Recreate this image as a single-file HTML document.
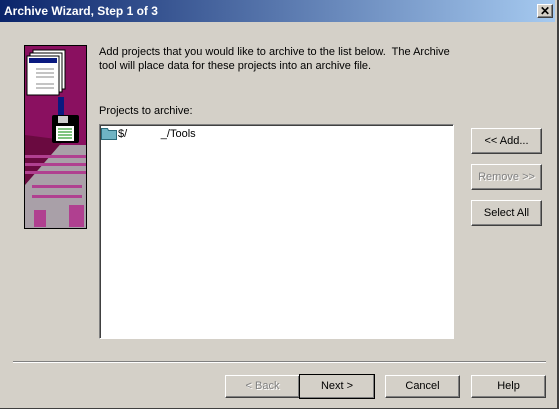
<!DOCTYPE html><html><head><style>
body{margin:0;width:559px;height:409px;background:#d4d0c8;font:11px Tahoma,"Liberation Sans",sans-serif;position:relative;overflow:hidden}
.a{position:absolute}
.title{left:0;top:0;width:555px;height:22px;background:linear-gradient(90deg,#0a246a,#a6caf0);color:#fff;font-weight:bold;font-size:12px;line-height:22px;padding-left:4px;box-sizing:border-box}
.btn{position:absolute;background:#d4d0c8;border:1px solid;border-color:#fff #404040 #404040 #fff;box-shadow:inset -1px -1px #808080;text-align:center;box-sizing:border-box;font-size:11px;color:#000}
.x{left:537px;top:4px;width:16px;height:14px;line-height:12px;font-weight:bold;font-size:12px}
</style></head><body>
<div class="a" style="left:0;top:0;width:559px;height:409px;box-sizing:border-box;border-right:2px solid #404040;border-bottom:1px solid #404040"></div>
<div class="a title">Archive Wizard, Step 1 of 3</div>
<div class="btn x">✕</div>
<svg class="a" style="left:24px;top:45px" width="63" height="184" viewBox="0 0 63 184">
<rect x="0.5" y="0.5" width="62" height="183" fill="#8a1060" stroke="#000"/>
<rect x="1" y="100" width="61" height="83" fill="#a9a0a8"/>
<polygon points="1,90 1,140 40,95" fill="#6a0a40"/>
<g fill="#b04090"><rect x="1" y="110" width="61" height="3"/><rect x="1" y="118" width="61" height="3"/><rect x="1" y="126" width="61" height="3"/><rect x="8" y="140" width="50" height="3"/><rect x="8" y="150" width="50" height="3"/><rect x="10" y="165" width="12" height="17"/><rect x="45" y="160" width="15" height="22"/></g>
<rect x="9" y="5" width="32" height="39" fill="#fff" stroke="#000"/><rect x="6" y="8" width="32" height="39" fill="#fff" stroke="#000"/><rect x="3" y="11" width="32" height="39" fill="#fff" stroke="#000"/>
<rect x="5" y="13" width="28" height="5" fill="#0a1a80"/>
<g stroke="#888"><line x1="12" y1="24" x2="30" y2="24"/><line x1="12" y1="28" x2="30" y2="28"/><line x1="12" y1="32" x2="30" y2="32"/><line x1="12" y1="39" x2="30" y2="39"/><line x1="12" y1="43" x2="30" y2="43"/></g>
<rect x="34" y="52" width="6" height="30" fill="#0a1a80"/><polygon points="28,80 46,80 37,92" fill="#0a1a80"/>
<rect x="28" y="70" width="27" height="28" rx="2" fill="#000"/><rect x="34" y="71" width="10" height="7" fill="#ccc"/><rect x="32" y="81" width="18" height="15" fill="#fff"/>
<g stroke="#080"><line x1="34" y1="84" x2="48" y2="84"/><line x1="34" y1="87" x2="48" y2="87"/><line x1="34" y1="90" x2="48" y2="90"/><line x1="34" y1="93" x2="48" y2="93"/></g>
</svg>
<div class="a" style="left:99px;top:45px;line-height:14px;width:360px">Add projects that you would like to archive to the list below.&nbsp; The Archive tool will place data for these projects into an archive file.</div>
<div class="a" style="left:99px;top:105px">Projects to archive:</div>
<div class="a" style="left:99px;top:124px;width:355px;height:215px;background:#fff;border:1px solid;border-color:#808080 #fff #fff #808080;box-shadow:inset 1px 1px #404040;box-sizing:border-box"></div>
<svg class="a" style="left:101px;top:127px" width="16" height="13"><path d="M0.5 1.5h6l1 2h8v9h-15z" fill="#6fb4c4" stroke="#2a6a7a"/></svg>
<div class="a" style="left:118px;top:128px">$/&nbsp;&nbsp;&nbsp;&nbsp;&nbsp;&nbsp;&nbsp;&nbsp;&nbsp;&nbsp;&nbsp;_/Tools</div>
<div class="btn" style="left:471px;top:128px;width:71px;height:26px;line-height:24px">&lt;&lt; Add...</div>
<div class="btn" style="left:471px;top:164px;width:71px;height:26px;line-height:24px;color:#808080;text-shadow:1px 1px #fff">Remove &gt;&gt;</div>
<div class="btn" style="left:471px;top:200px;width:71px;height:26px;line-height:24px">Select All</div>
<div class="a" style="left:13px;top:361px;width:533px;height:1px;background:#808080;border-bottom:1px solid #fff"></div>
<div class="btn" style="left:225px;top:375px;width:75px;height:23px;line-height:21px;color:#808080;text-shadow:1px 1px #fff">&lt; Back</div>
<div class="btn" style="left:299px;top:374px;width:76px;height:25px;line-height:23px;outline:1px solid #000;outline-offset:-1px">Next &gt;</div>
<div class="btn" style="left:385px;top:375px;width:75px;height:23px;line-height:21px">Cancel</div>
<div class="btn" style="left:471px;top:375px;width:75px;height:23px;line-height:21px">Help</div>
</body></html>
